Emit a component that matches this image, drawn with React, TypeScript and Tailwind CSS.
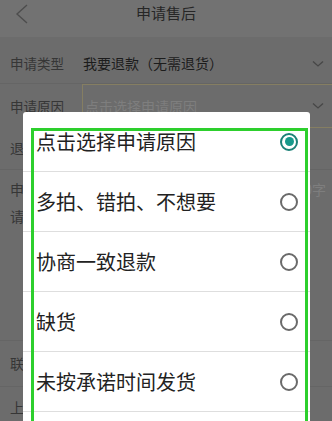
import React from 'react'

const reasons = ['点击选择申请原因', '多拍、错拍、不想要', '协商一致退款', '缺货', '未按承诺时间发货']

function ChevronDown() {
	return (
		<svg width="12" height="8" viewBox="0 0 12 8" fill="none">
			<path d="M1 1.5 L6 6 L11 1.5" stroke="#474747" strokeWidth="1.3" />
		</svg>
	)
}

function Radio({ checked }: { checked: boolean }) {
	return checked ? (
		<span className="w-[18px] h-[18px] rounded-full border-2 border-[#1c8177] flex items-center justify-center">
			<span className="w-[9px] h-[9px] rounded-full bg-[#17998b]" />
		</span>
	) : (
		<span className="w-[18px] h-[18px] rounded-full border-2 border-[#6a6a6a]" />
	)
}

function App() {
	return (
		<div
			className="relative w-[332px] h-[421px] overflow-hidden bg-[#6c6c6c]"
			style={{ fontFamily: '"Noto Sans CJK SC", "Noto Sans", sans-serif' }}>
			<header className="relative h-[37px] bg-[#727272] flex items-center justify-center">
				<svg className="absolute left-[15px] top-[4px]" width="14" height="20" viewBox="0 0 14 20" fill="none">
					<path d="M12 1 L2 10 L12 19" stroke="#4d4d4d" strokeWidth="1.4" />
				</svg>
				<h1 className="text-[15px] text-[#262626] -mt-[10px]">申请售后</h1>
			</header>

			<div className="mt-[7px] h-[40px] flex items-center border-b border-[#656565]">
				<span className="w-[83px] pl-[10px] text-[13.5px] text-[#363636]">申请类型</span>
				<span className="flex-1 text-[14px] text-[#1c1c1c]">我要退款（无需退货）</span>
				<span className="pr-[8px]"><ChevronDown /></span>
			</div>

			<div className="h-[44px] flex items-center">
				<span className="w-[82px] pl-[10px] text-[13.5px] text-[#363636]">申请原因</span>
				<div className="flex-1 h-full flex items-center border border-r-0 border-[#857e62] pl-[2px]">
					<span className="flex-1 text-[14px] text-[#7e7e7e]">点击选择申请原因</span>
					<span className="pr-[8px]"><ChevronDown /></span>
				</div>
			</div>

			<div className="h-[42px] flex items-center border-b border-[#656565] pl-[10px] text-[14px] text-[#363636]">
				退款金额
			</div>

			<div className="pl-[10px] pr-[6px] pt-[6px] h-[171px] border-b border-[#656565] text-[14px] leading-[27px]">
				<div className="flex justify-between">
					<span className="text-[#363636]">申请说明</span>
					<span className="text-[#7e7e7e]">0/200字</span>
				</div>
				<div className="text-[#363636]">请您详细填写申请说明</div>
			</div>

			<div className="h-[46px] flex items-center pl-[10px] text-[14px] text-[#363636] border-b border-[#656565]">
				联系电话
			</div>
			<div className="h-[40px] flex items-center pl-[10px] text-[14px] text-[#363636]">
				上传凭证
			</div>

			<div className="absolute left-[23px] top-[112px] w-[287px] h-[320px] bg-white rounded-[3px]">
				{reasons.map((r, i) => (
					<div
						key={r}
						className="h-[60px] flex items-center justify-between pl-[13px] pr-[12px] border-b border-[#dedede]">
						<span className="text-[20px] text-[#222222]">{r}</span>
						<Radio checked={i === 0} />
					</div>
				))}
			</div>

			<div className="absolute left-[31px] top-[128px] w-[277px] h-[320px] border-[3px] border-[#2dcf2d]" />
		</div>
	)
}

export default App
